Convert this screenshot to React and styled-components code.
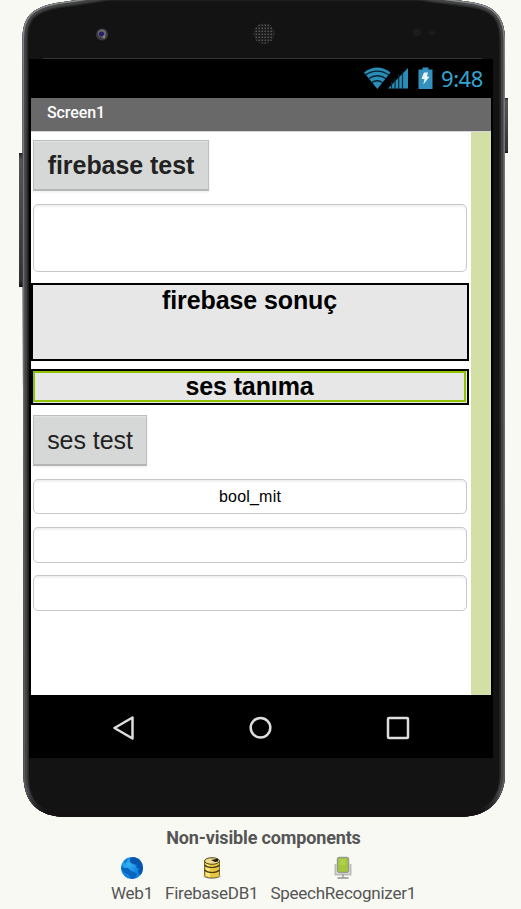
import React from "react";
import styled, { createGlobalStyle, css } from "styled-components";

const GlobalStyle = createGlobalStyle`
  * { box-sizing: border-box; }
  html, body { margin: 0; padding: 0; background: #f8f9f3; overflow: hidden; }
`;

const Page = styled.main`
  width: 521px;
  height: 909px;
  background: #f8f9f3;
  overflow: hidden;
  font-family: Roboto, sans-serif;
`;

const Phone = styled.section`
  position: relative;
  height: 818px;
  padding: 0 28px 0 29px;
  display: flex;
  flex-direction: column;
`;

const CaseArt = styled.svg`
  position: absolute;
  inset: 0;
  width: 521px;
  height: 818px;
`;

const Earpiece = styled.div`
  flex: 0 0 59px;
`;

const Display = styled.div`
  position: relative;
  width: 464px;
  height: 699px;
  padding: 0 2px;
  background: #000;
  display: flex;
  flex-direction: column;
`;

const StatusBar = styled.header`
  height: 39px;
  padding: 0 7px 2px 0;
  display: flex;
  align-items: center;
  justify-content: flex-end;
  color: #33a5d0;
`;

const StatusIcons = styled.svg`
  width: 72px;
  height: 24px;
  margin: 0 6px 0 0;
`;

const Clock = styled.time`
  width: 43px;
  font: 22px/24px "Noto Sans", sans-serif;
  letter-spacing: -0.45px;
  white-space: nowrap;
`;

const TitleBar = styled.div`
  height: 33px;
  padding: 6px 16px;
  background: #696969;
  color: #fff;
  font-size: 16px;
  font-weight: 500;
  letter-spacing: -0.1px;
  line-height: 18px;
`;

const Workspace = styled.div`
  height: 564px;
  display: flex;
  background: linear-gradient(#d8d4d8 1px, #fff 1px);
`;

const Form = styled.div`
  width: 440px;
  padding-top: 9px;
  display: flex;
  flex-direction: column;
  align-items: flex-start;
  font-family: "Liberation Sans", Arial, sans-serif;
`;

const ScrollStrip = styled.div`
  width: 20px;
  margin-top: 1px;
  background: #d2e0a6;
`;

const FormButton = styled.button`
  width: ${(p) => p.$width}px;
  height: 51px;
  margin: 0 2px ${(p) => p.$gap}px;
  padding: 0 0 1px;
  border: 1px solid #bcbebd;
  border-bottom: 2px solid #b4b5b5;
  background: #d6d8d7;
  box-shadow: inset 0 2px 1px -1px #e2e3e3, 0 1px 2px rgba(0, 0, 0, 0.08);
  color: #222;
  font: ${(p) => (p.$bold ? 700 : 400)} 25px/30px "Liberation Sans", Arial, sans-serif;
  letter-spacing: -0.05px;
  white-space: nowrap;
`;

const FieldBox = styled.div`
  width: 434px;
  height: ${(p) => p.$height}px;
  margin: 0 2px ${(p) => p.$gap}px;
  border: 1px solid #c8c8c8;
  border-radius: 5px;
  background: #fff;
  box-shadow: inset 0 2px 2px rgba(0, 0, 0, 0.06);
  color: #000;
  font-size: 16px;
  letter-spacing: 0.2px;
  line-height: 34px;
  text-align: center;
`;

const LabelBox = styled.div`
  width: 438px;
  height: ${(p) => p.$height}px;
  margin-bottom: ${(p) => p.$gap}px;
  border: 2px solid #000;
  background: #e7e7e7;
  color: #000;
  font-weight: 700;
  font-size: 25px;
  letter-spacing: -0.1px;
  line-height: 30px;
  text-align: center;
`;

const LabelText = styled.div`
  width: 433px;
  height: 31px;
  ${(p) =>
    p.$selected &&
    css`
      border: 2px solid #8fc202;
      line-height: 27px;
    `}
`;

const NavBar = styled.nav`
  height: 63px;
  padding: 0 80px;
  display: flex;
  align-items: center;
  justify-content: space-between;
`;

const NavIcon = styled.svg`
  width: 26px;
  height: 26px;
  margin-top: 3px;
  fill: none;
  stroke: #dedcde;
  stroke-width: 2.5;
  stroke-linejoin: round;
`;

const Tray = styled.footer`
  padding: 9px 0 0 6px;
  color: #555;
  text-align: center;
`;

const TrayTitle = styled.h2`
  margin: 0;
  font-size: 18px;
  line-height: 22px;
  font-weight: 700;
  letter-spacing: -0.15px;
`;

const ComponentList = styled.div`
  display: flex;
  justify-content: center;
  gap: 12px;
  padding-top: 7px;
`;

const ComponentItem = styled.div`
  display: flex;
  flex-direction: column;
  align-items: center;
  gap: 2px;
  font-size: 17px;
  letter-spacing: -0.24px;
  line-height: 23px;
`;

const ComponentIcon = styled.svg`
  width: 24px;
  height: 24px;
`;

const casePath =
  "M22.5 40 C22.5 17 31 8 56 3 C75 0 85 -1 110 -5 H418 C444 -1 458 0 473 2.5 C495 6 505 17 505 40 V776 C504 797 492 816 461 817 H67 C37 817 24 801 23.5 777 Z";

function PhoneCase() {
  return (
    <CaseArt viewBox="0 0 521 818" aria-hidden="true">
      <defs>
        <linearGradient id="key" x1="0" x2="0" y1="0" y2="1">
          <stop offset="0" stopColor="#242424" />
          <stop offset="0.05" stopColor="#555" />
          <stop offset="0.5" stopColor="#454545" />
          <stop offset="0.95" stopColor="#333" />
          <stop offset="1" stopColor="#111" />
        </linearGradient>
        <linearGradient id="edge" x1="0" x2="0" y1="0" y2="1">
          <stop offset="0" stopColor="#8a8c8d" />
          <stop offset="0.1" stopColor="#77797a" />
          <stop offset="0.9" stopColor="#5b5c5f" />
          <stop offset="0.97" stopColor="#5b5c5f" />
          <stop offset="0.995" stopColor="#151113" />
        </linearGradient>
        <linearGradient id="rim" x1="0" x2="0" y1="0" y2="1">
          <stop offset="0.97" stopColor="#424345" />
          <stop offset="0.993" stopColor="#151113" />
        </linearGradient>
        <linearGradient id="innerRim" x1="0" x2="0" y1="0" y2="1">
          <stop offset="0.95" stopColor="#29292a" />
          <stop offset="0.985" stopColor="#131313" />
        </linearGradient>
        <clipPath id="case"><path d={casePath} /></clipPath>
        <pattern id="mesh" width="3" height="3" patternUnits="userSpaceOnUse">
          <circle cx="1.2" cy="1.2" r="0.75" fill="#666" />
        </pattern>
      </defs>
      <rect x="19" y="153" width="5" height="134" fill="url(#key)" />
      <rect x="503" y="98" width="5" height="55" fill="url(#key)" />
      <path d={casePath} fill="#131313" />
      <g clipPath="url(#case)" fill="none">
        <path d={casePath} stroke="url(#innerRim)" strokeWidth="11" />
        <path d={casePath} stroke="url(#rim)" strokeWidth="8" />
        <path d={casePath} stroke="url(#edge)" strokeWidth="3" />
      </g>
      <path d="M43 58.5H482" stroke="#333" />
      <circle cx="102" cy="34.5" r="6" fill="#3c3a3d" />
      <circle cx="102" cy="33.5" r="4" fill="#68666d" />
      <circle cx="101.5" cy="34" r="2.6" fill="#24216b" />
      <circle cx="104" cy="37" r="1.4" fill="#858386" />
      <circle cx="264" cy="33.5" r="10.5" fill="#1b1b1b" />
      <circle cx="264" cy="33.5" r="10.5" fill="url(#mesh)" />
      <circle cx="417" cy="32.5" r="4" fill="#1e1b1c" />
      <ellipse cx="432" cy="33" rx="3.5" ry="2" fill="#1e1c1d" />
    </CaseArt>
  );
}

function StatusGlyphs() {
  return (
    <StatusIcons viewBox="0 0 72 24" aria-hidden="true">
      <path d="M1 6.5Q14.3-3.5 27.5 6.5L14.3 23Z" fill="#2a8db7" />
      <path d="M2 9.2Q14.3 1 26.5 9.2M5 13Q14.3 6.5 23.5 13M8.3 17Q14.3 12.5 20 17" fill="none" stroke="#06212c" strokeWidth="1.3" />
      <path d="M25 22.5L45 2V22.5Z" fill="#2a8db7" />
      <path d="M28.5 16V23M32 12V23M35.7 8V23M39.5 5V23" stroke="#082936" strokeWidth="1.2" />
      <path d="M55.5 3.5H59.5V1.5H65.5V3.5H69.5V23H55.5Z" fill="#3292bd" />
      <path d="M61 6.5H65L64 10.5L66.5 10.8L60.3 18.5L61.5 13.3L58.5 12.8Z" fill="#ecf4fa" />
    </StatusIcons>
  );
}

function Globe() {
  return (
    <ComponentIcon viewBox="0 0 24 24">
      <defs>
        <radialGradient id="sea" cx="0.35" cy="0.35">
          <stop stopColor="#35b2f2" />
          <stop offset="1" stopColor="#0d83df" />
        </radialGradient>
      </defs>
      <circle cx="12" cy="12" r="11" fill="url(#sea)" />
      <path d="M10 2L14 1L19 3L22 7L23 12L22 17L20 19L18 16L19 13L16 11L17 9L13 8L10 6Z" fill="#0755ac" />
      <path d="M1 10L4 12L8 12L11 15L14 16L17 18L15 22L11 23L9 19L5 17L2 14Z" fill="#0864bd" />
      <path d="M4 5L8 2L7 5L5 8Z" fill="#0e7dcb" />
    </ComponentIcon>
  );
}

function Database() {
  return (
    <ComponentIcon viewBox="0 0 24 24">
      <ellipse cx="12" cy="20.5" rx="9" ry="2.2" fill="#aaa" opacity=".6" />
      <path d="M4.5 5V19.5Q5 22 12 22Q19 22 19.5 19.5V5Z" fill="#e8c641" stroke="#776a38" />
      <path d="M7 8V20M9 9V21" stroke="#fae784" strokeWidth="2" />
      <path d="M4.5 9Q7 11.5 12 11.5Q17 11.5 19.5 9M4.5 14Q7 16.5 12 16.5Q17 16.5 19.5 14" fill="none" stroke="#4a3e16" strokeWidth="1.2" />
      <ellipse cx="12" cy="5" rx="7.5" ry="3.3" fill="#eddb8b" stroke="#554817" />
      <path d="M11 4L18 2.7V5.5L15 6Z" fill="#171714" />
    </ComponentIcon>
  );
}

function Microphone() {
  return (
    <ComponentIcon viewBox="0 0 24 24">
      <path d="M4.5 8V18.5H19.5V8" fill="none" stroke="#bbbdbc" strokeWidth="2" />
      <path d="M12 18V21.5M6.5 22H17.5" stroke="#aaa" strokeWidth="2" />
      <rect x="6.5" y="1.5" width="11" height="15" rx="2" fill="#a4c739" stroke="#979d91" strokeWidth="1.5" />
      <rect x="8.5" y="3" width="6" height="6" fill="#bbd657" opacity=".6" />
    </ComponentIcon>
  );
}

const hiddenComponents = [
  { name: "Web1", Icon: Globe },
  { name: "FirebaseDB1", Icon: Database },
  { name: "SpeechRecognizer1", Icon: Microphone },
];

export default function App() {
  return (
    <Page>
      <GlobalStyle />
      <Phone>
        <PhoneCase />
        <Earpiece />
        <Display>
          <StatusBar>
            <StatusGlyphs />
            <Clock>9:48</Clock>
          </StatusBar>
          <TitleBar>Screen1</TitleBar>
          <Workspace>
            <Form>
              <FormButton $width={176} $gap={13} $bold>firebase test</FormButton>
              <FieldBox $height={68} $gap={11} />
              <LabelBox $height={78} $gap={8}>
                <LabelText>firebase sonuç</LabelText>
              </LabelBox>
              <LabelBox $height={36} $gap={10}>
                <LabelText $selected>ses tanıma</LabelText>
              </LabelBox>
              <FormButton $width={114} $gap={13}>ses test</FormButton>
              <FieldBox $height={35} $gap={13}>bool_mit</FieldBox>
              <FieldBox $height={36} $gap={12} />
              <FieldBox $height={36} $gap={0} />
            </Form>
            <ScrollStrip />
          </Workspace>
          <NavBar>
            <NavIcon viewBox="0 0 26 26"><path d="M3.5 13L21.5 2.5V23.5Z" /></NavIcon>
            <NavIcon viewBox="0 0 26 26"><circle cx="12.5" cy="12.7" r="9.8" /></NavIcon>
            <NavIcon viewBox="0 0 26 26"><rect x="3" y="3" width="20" height="20" rx="1" /></NavIcon>
          </NavBar>
        </Display>
      </Phone>
      <Tray>
        <TrayTitle>Non-visible components</TrayTitle>
        <ComponentList>
          {hiddenComponents.map(({ name, Icon }) => (
            <ComponentItem key={name}>
              <Icon />
              <span>{name}</span>
            </ComponentItem>
          ))}
        </ComponentList>
      </Tray>
    </Page>
  );
}
